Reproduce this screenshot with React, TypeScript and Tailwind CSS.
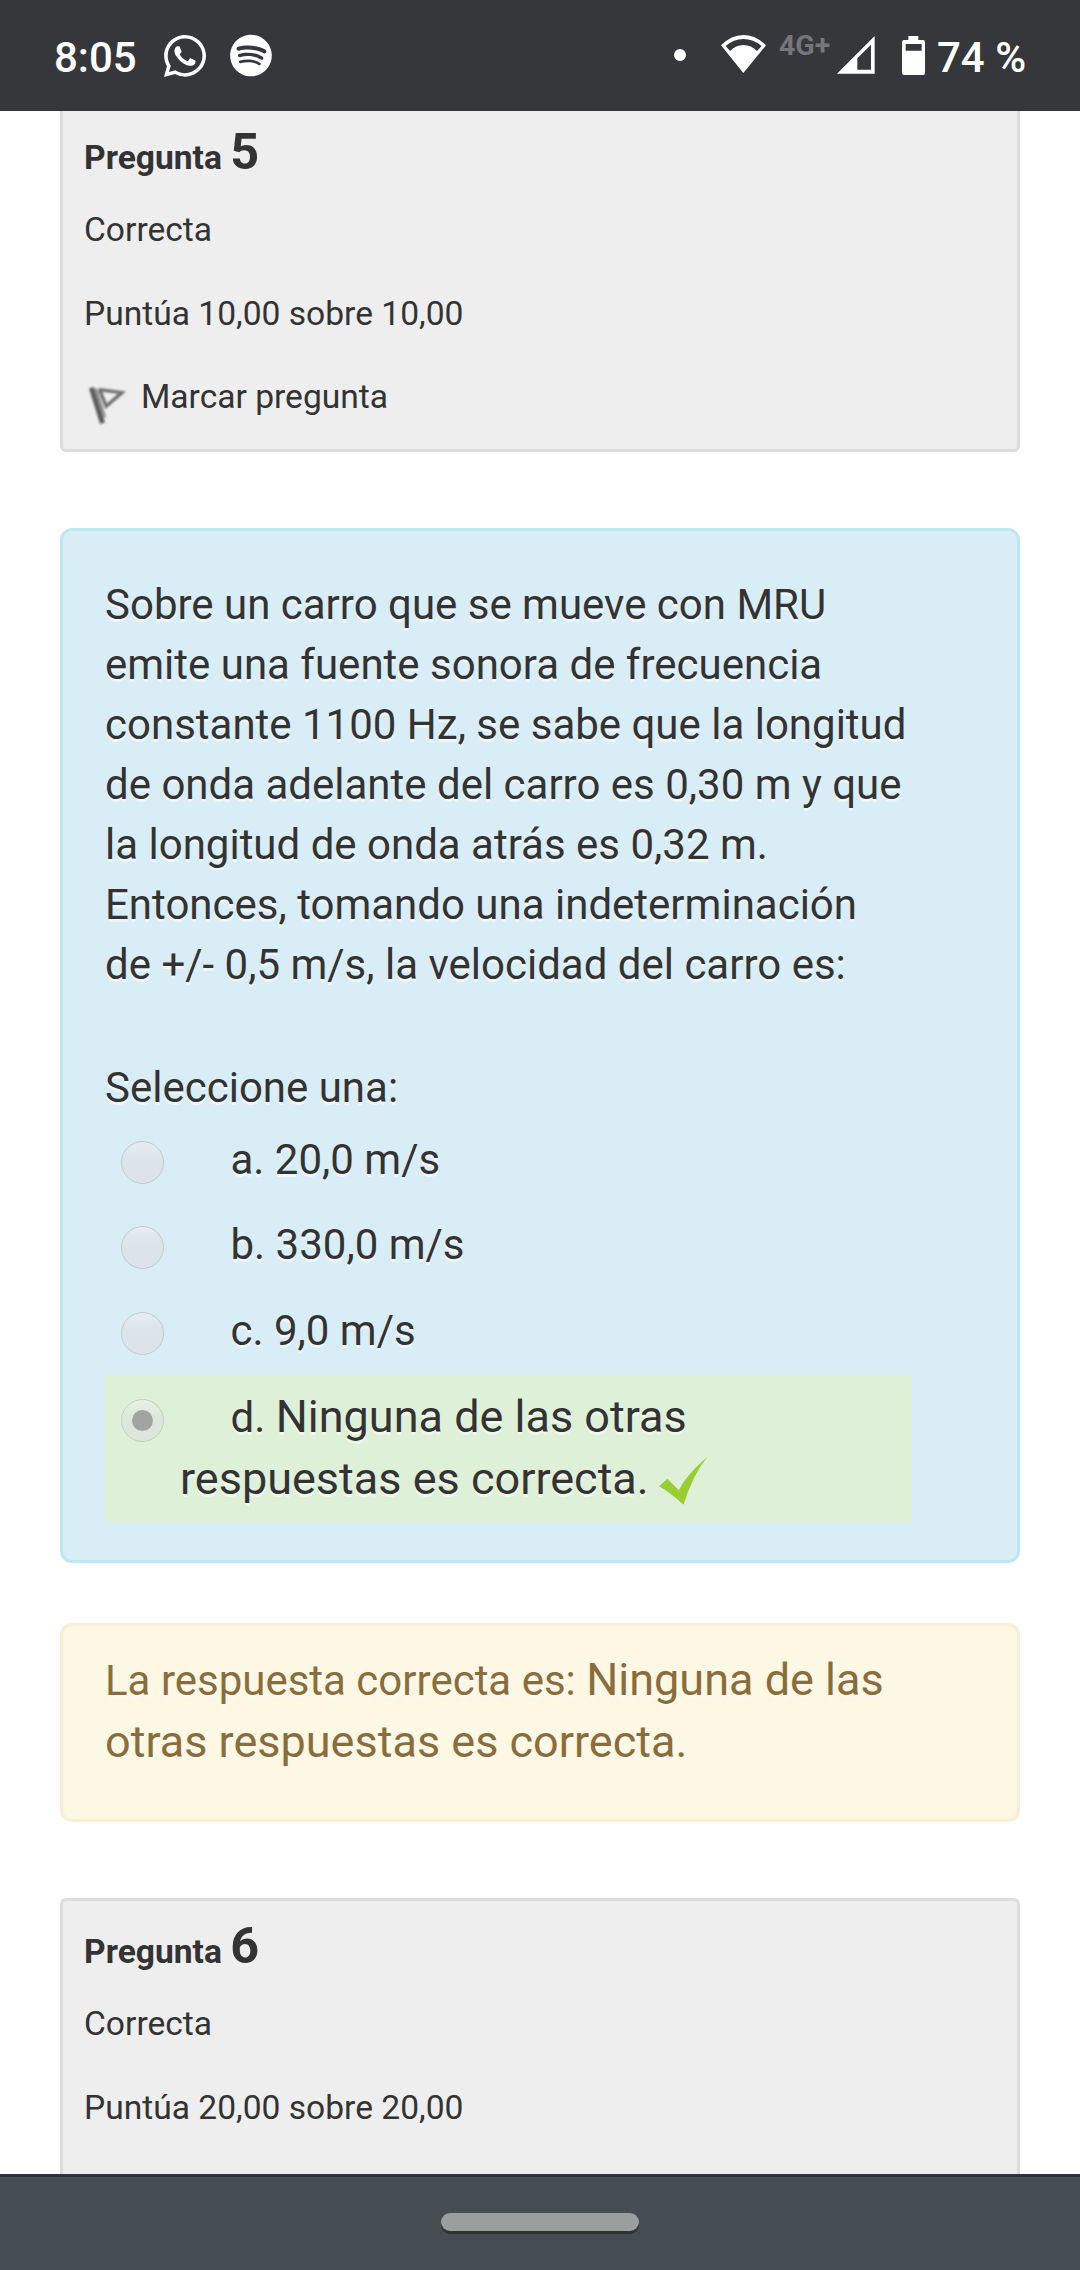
import { FaSpotify, FaWhatsapp } from "react-icons/fa";

function WifiIcon() {
  return (
    <svg className="mt-[35px] ml-[35px] h-[38px] w-[45px]" viewBox="303 105 135 114" fill="#fff">
      <path
        fillRule="evenodd"
        d="M370 219 L303 136 Q334 105 370 105 Q407 105 438 136 Z M317 138 L330 153 Q347 135 370 135 Q394 135 411 153 L425 138 Q400 117 370 117 Q341 117 317 138 Z"
      />
    </svg>
  );
}

function SignalIcon() {
  return (
    <svg className="mt-[36px] ml-[6px] h-[38px] w-[38px]" viewBox="651 108 114 114" fill="#fff">
      <path fillRule="evenodd" d="M651 221 L764 108 V221 Z M712 175 V209 H753 V134 Z" />
    </svg>
  );
}

function BatteryIcon() {
  return (
    <svg className="mt-[36px] ml-[27px] h-[39px] w-[23px]" viewBox="846 108 69 117" fill="#fff">
      <path
        fillRule="evenodd"
        d="M865 108 H895 V120 H909 Q915 120 915 126 V219 Q915 225 909 225 H852 Q846 225 846 219 V126 Q846 120 852 120 H865 Z M857 132 V152 H905 V132 Z"
      />
    </svg>
  );
}

function StatusBar() {
  return (
    <header className="flex h-[111px] shrink-0 items-start justify-between bg-[#36373b] pr-[54px] pl-[54px] text-[42px] leading-[48px] font-medium text-white">
      <div className="flex items-start">
        <span className="mt-[34px] w-[83px] whitespace-nowrap">8:05</span>
        <FaWhatsapp className="mt-[32px] ml-[27px] h-[48px] w-[42px]" />
        <FaSpotify className="mt-[34px] ml-[24px] h-[43px] w-[42px]" />
      </div>
      <div className="flex items-start">
        <span className="mt-[49px] size-[12px] rounded-full bg-white" />
        <WifiIcon />
        <span className="mt-[30px] ml-[13px] w-[52px] text-[28.5px] leading-[32px] font-bold whitespace-nowrap text-[#75767a]">
          4G+
        </span>
        <SignalIcon />
        <BatteryIcon />
        <span className="mt-[34px] ml-[12px] w-[89px] whitespace-nowrap">74 %</span>
      </div>
    </header>
  );
}

function FlagIcon() {
  return (
    <svg className="h-[43px] w-[38px] overflow-visible blur-[1px]" viewBox="145 608 115 130" fill="none">
      <path d="M155 622 L189 730" stroke="#5c5c5c" strokeWidth="15" />
      <path d="M168 624 L196 712" stroke="#8c8c8c" strokeWidth="8" />
      <path d="M178 628 L248 637 L200 678 L180 628" stroke="#6e6e6e" strokeWidth="10" />
    </svg>
  );
}

function InfoCard({ number, grade, flag }: { number: string; grade: string; flag?: boolean }) {
  return (
    <section className="h-[348px] shrink-0 rounded-[6px] border-[3px] border-[#dcdcdc] bg-[#eee] pl-[21px] text-[33.6px] text-[#333]">
      <h2 className="mt-[15px] flex h-[60px] items-baseline font-bold whitespace-pre">
        <span className="leading-[60px]">Pregunta </span>
        <span className="text-[50.4px] leading-[60px]">{number}</span>
      </h2>
      <p className="mt-[24px] leading-[48px]">Correcta</p>
      <p className="mt-[36px] leading-[48px]">{grade}</p>
      {flag && (
        <div className="mt-[35px] flex leading-[48px]">
          <span className="mt-[10px] ml-[4px] h-[43px] w-[53px]">
            <FlagIcon />
          </span>
          <span>Marcar pregunta</span>
        </div>
      )}
    </section>
  );
}

const questionLines = [
  "Sobre un carro que se mueve con MRU",
  "emite una fuente sonora de frecuencia",
  "constante 1100 Hz, se sabe que la longitud",
  "de onda adelante del carro es 0,30 m y que",
  "la longitud de onda atrás es 0,32 m.",
  "Entonces, tomando una indeterminación",
  "de +/- 0,5 m/s, la velocidad del carro es:",
];

const options = [
  { text: "a. 20,0 m/s", row: "h-[85px]" },
  { text: "b. 330,0 m/s", row: "h-[86px]" },
  { text: "c. 9,0 m/s", row: "h-[74px]" },
];

function Radio() {
  return (
    <span className="mt-[11px] ml-[16px] size-[43px] shrink-0 rounded-full border border-[#c0cacf] bg-linear-to-b from-[#e5edf3] via-[#dde4ea] via-40% to-[#dce3e8]" />
  );
}

function CheckedRadio() {
  return (
    <span className="mt-[25px] ml-[16px] flex size-[43px] shrink-0 items-center justify-center rounded-full border border-[#c3cfbf] bg-linear-to-b from-[#e8f1e6] via-[#dde7db] via-40% to-[#dde6dc]">
      <span className="size-[21px] rounded-full bg-[#a0a69f]" />
    </span>
  );
}

function CheckMark() {
  return (
    <svg className="mt-[7px] h-[52px] w-[54px]" viewBox="0 0 54 52">
      <path
        d="M3.1 31.3 L11.4 23.7 L22.8 35.3 Q31.4 18.5 51 2.3 Q36.5 20.5 27.6 49.7 Q14 37.5 3.1 31.3 Z"
        fill="#9acd32"
      />
    </svg>
  );
}

function QuestionCard() {
  return (
    <section className="mt-[76px] h-[1035px] shrink-0 rounded-[12px] border-[3px] border-[#bce8f1] bg-[#d9edf7] pt-[44px] pl-[42px] text-[42px] leading-[60px] text-[#333] [text-shadow:0_3px_0_rgba(255,255,255,0.5)]">
      {questionLines.map((line) => (
        <p key={line} className="whitespace-nowrap">
          {line}
        </p>
      ))}
      <p className="mt-[63px]">Seleccione una:</p>
      <ul className="mt-[12px]">
        {options.map(({ text, row }) => (
          <li key={text} className={`flex items-start ${row}`}>
            <Radio />
            <span className="ml-[66.5px] whitespace-nowrap">{text}</span>
          </li>
        ))}
        <li className="-mt-[1px] flex h-[149px] w-[807px] items-start bg-[#dff0d8]">
          <CheckedRadio />
          <div className="ml-[16px] pt-[12px] text-[45px] leading-[62px] whitespace-nowrap">
            <p className="h-[62px] pl-[50.5px]">
              <span className="text-[42px]">d. </span>Ninguna de las otras
            </p>
            <p className="flex h-[62px]">
              respuestas es correcta.
              <span className="ml-[7px]">
                <CheckMark />
              </span>
            </p>
          </div>
        </li>
      </ul>
    </section>
  );
}

function FeedbackCard() {
  return (
    <section className="mt-[60px] h-[199px] shrink-0 rounded-[12px] border-[3px] border-[#fbeed5] bg-[#fcf8e3] pt-[23px] pl-[42px] text-[45px] leading-[62px] whitespace-nowrap text-[#8a6d3b] [text-shadow:0_3px_0_rgba(255,255,255,0.5)]">
      <p className="h-[62px]">
        <span className="text-[42px]">La respuesta correcta es: </span>Ninguna de las
      </p>
      <p className="h-[62px]">otras respuestas es correcta.</p>
    </section>
  );
}

export default function App() {
  return (
    <div className="flex h-[2270px] w-[1080px] flex-col overflow-hidden bg-white font-[Roboto,sans-serif]">
      <StatusBar />
      <main className="flex h-[2063px] shrink-0 flex-col overflow-hidden px-[60px]">
        <div className="-mt-[7px] flex flex-col">
          <InfoCard number="5" grade="Puntúa 10,00 sobre 10,00" flag />
          <QuestionCard />
          <FeedbackCard />
          <div className="mt-[76px] flex flex-col">
            <InfoCard number="6" grade="Puntúa 20,00 sobre 20,00" />
          </div>
        </div>
      </main>
      <nav className="flex h-[96px] shrink-0 justify-center border-t-[3px] border-[#2d3436] bg-[#454c52]">
        <span className="mt-[36px] h-[18px] w-[198px] rounded-full bg-[#9a9e9f] shadow-[0_3px_0_#2d3436]" />
      </nav>
    </div>
  );
}
